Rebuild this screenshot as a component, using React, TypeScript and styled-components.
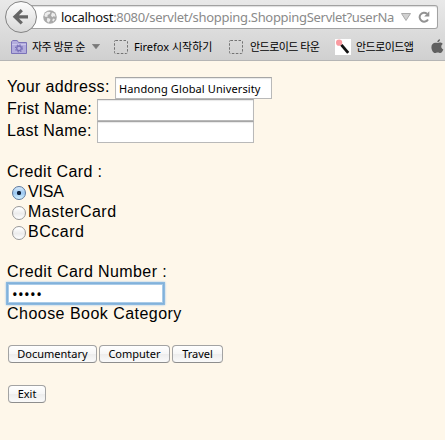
import React from 'react';
import styled, { createGlobalStyle } from 'styled-components';

const GlobalStyle = createGlobalStyle`
  * { box-sizing: border-box; }
  html, body { margin: 0; background: #fef7ea; overflow: hidden; }
`;
const uiFont = `"Noto Sans", "Noto Sans CJK KR", sans-serif`;

const Page = styled.div`
  width: 445px;
  height: 440px;
  overflow: hidden;
  background: #fef7ea;
  color: #000;
`;
const Chrome = styled.header`
  height: 61px;
  background: linear-gradient(#e9e9e9, #dedede 45%, #d0d0d0);
  border-bottom: 1px solid #b5b5b5;
  font-family: ${uiFont};
`;
const NavBar = styled.div`
  display: flex;
  height: 33px;
  padding-left: 5px;
`;
const BackButton = styled.button`
  position: relative;
  z-index: 1;
  flex: none;
  width: 32px;
  height: 32px;
  margin-top: 1px;
  padding: 0;
  display: grid;
  place-items: center;
  border: 1px solid #838383;
  border-radius: 50%;
  background: linear-gradient(#fcfcfc, #d9d9d9);
`;
const UrlBar = styled.div`
  display: flex;
  flex: none;
  align-items: center;
  width: 412px;
  height: 24px;
  margin: 5px 0 0 -11px;
  padding-left: 17px;
  border: 1px solid #a2a2a2;
  border-left: 0;
  border-radius: 0 3px 3px 0;
  background: #fff;
  box-shadow: inset 0 1px 1px #ddd;
`;
const Url = styled.div`
  width: 340px;
  margin-left: 4px;
  white-space: nowrap;
  font-size: 13px;
  line-height: 20px;
  letter-spacing: -0.31px;
  color: #8a8a8a;
`;
const Host = styled.span`
  color: #111;
`;
const UrlIcons = styled.div`
  display: flex;
  align-items: center;
  gap: 7px;
`;
const Bookmarks = styled.nav`
  display: flex;
  height: 27px;
  padding-left: 11px;
`;
const Bookmark = styled.a<{ $w: number }>`
  display: flex;
  flex: none;
  align-items: center;
  width: ${p => p.$w}px;
  color: #000;
  white-space: nowrap;
  svg { flex: none; }
`;
const BookmarkLabel = styled.span<{ $gap?: number; $spacing?: number }>`
  margin-left: ${p => p.$gap ?? 5}px;
  font-size: 11px;
  line-height: 18px;
  letter-spacing: ${p => p.$spacing ?? 0}px;
`;
const DropMark = styled.span`
  display: flex;
  margin-left: 7px;
`;
const Form = styled.main`
  padding: 15px 0 0 7px;
  font-family: "Liberation Sans", Arial, sans-serif;
  font-size: 16px;
`;
const Row = styled.div<{ $h?: number; $top?: number }>`
  display: flex;
  height: ${p => p.$h ?? 20}px;
  margin-top: ${p => p.$top ?? 0}px;
`;
const Label = styled.label<{ $spacing?: number }>`
  line-height: 20px;
  letter-spacing: ${p => p.$spacing ?? 0.35}px;
  white-space: nowrap;
`;
const FieldSlot = styled.div<{ $x: number }>`
  display: grid;
  grid-template-columns: ${p => p.$x}px auto;
`;
const Input = styled.input`
  width: 157px;
  height: 22px;
  padding: 1px 3px 0;
  border: 1px solid #b9b9b9;
  border-top-color: #a6a6a6;
  border-radius: 0;
  outline: none;
  background: #fff;
  box-shadow: inset 0 1px 1px #e8e8e8;
  font-family: ${uiFont};
  font-size: 11px;
  letter-spacing: 0.11px;
  color: #000;
`;
const PasswordInput = styled(Input)`
  height: 21px;
  margin-top: 1px;
  padding: 0 4px;
  border-color: #82b1da;
  box-shadow: 0 0 0 1px #8bb9e0, 0 0 2px 1px #9bc5e8, inset 0 0 0 1px #a9cbe8;
  font-size: 15px;
  letter-spacing: 0.4px;
`;
const Radio = styled.input`
  appearance: none;
  width: 14px;
  height: 14px;
  margin: 4px 2px 0 5px;
  border: 1px solid #999;
  border-radius: 50%;
  background: linear-gradient(#fff 10%, #ececec 55%, #fff);
  &:checked {
    border-color: #5b789e;
    background: radial-gradient(circle at 50% 50%, #10233f 0 1.8px, transparent 2.5px),
      linear-gradient(#d9eafa, #9bc8f2 50%, #d5f2ff);
  }
`;
const Button = styled.button<{ $w: number }>`
  width: ${p => p.$w}px;
  height: 18px;
  margin: 0 2px 0 0;
  padding: 0;
  border: 1px solid #a3a3a3;
  border-bottom-color: #8e8e8e;
  border-radius: 4px;
  background: linear-gradient(#fff, #f6f6f6 50%, #ededed 51%, #fafafa);
  font-family: ${uiFont};
  font-size: 11px;
  line-height: 16px;
  color: #000;
`;
const Buttons = styled(Row)`
  padding-left: 1px;
`;

const BackArrow = () => (
  <svg width="18" height="18" viewBox="0 0 18 18">
    <path d="M9.8 2.2 3 8.8l6.8 6.6M4 8.8h12" fill="none" stroke="#666" strokeWidth="3.2" />
  </svg>
);
const Globe = () => (
  <svg width="14" height="14" viewBox="0 0 14 14">
    <circle cx="7" cy="7" r="6.8" fill="#a9a9a9" />
    <path d="M2 3.5 4.5 1.7l3 .3-.8 2-2.2 1 .3 1.4L2.8 7 1.3 6zM9 2.5l2.8 1.2.8 3-2-.4-1.4 1L8 5.5zM4.4 7.7l3 1.2-.4 2-1.8 1.8-1.4-2zM10 8.5l2 .4-1.5 2.5-1.3-.8z" fill="#ededed" />
  </svg>
);
const FolderIcon = () => (
  <svg width="16" height="14" viewBox="0 0 16 14">
    <path d="M.5 13.5V1.8L1.7.5h4.5l1.3 2h8v11z" fill="#b3addd" stroke="#7b73b8" />
    <path d="M1 4.5h14" stroke="#cbc6eb" />
    <circle cx="8" cy="8.3" r="2.3" fill="#b9b2e1" stroke="#7870b8" strokeWidth="1.3" />
    <circle cx="8" cy="8.3" r="3.5" fill="none" stroke="#7870b8" strokeWidth="1.1" strokeDasharray="1.4 1.35" />
  </svg>
);
const Placeholder = () => (
  <svg width="14" height="14" viewBox="0 0 14 14">
    <rect x=".5" y=".5" width="13" height="13" rx="1" fill="none" stroke="#737373" strokeDasharray="2.5 1.5" />
  </svg>
);
const Triangle = ({ small = false }: { small?: boolean }) => (
  <svg width={small ? 8 : 10} height={small ? 5 : 8} viewBox="0 0 10 8" preserveAspectRatio="none">
    <path d="M.5.5h9L5 7.5z" fill={small ? '#787878' : '#d1d1d1'} stroke={small ? '#787878' : '#aaa'} />
  </svg>
);
const Reload = () => (
  <svg width="12" height="12" viewBox="0 0 12 12">
    <path d="M10 8.5A4.5 4.5 0 1 1 9 2.7" fill="none" stroke="#929292" strokeWidth="2" />
    <path d="M11.3.3v5.2H6.2z" fill="#929292" />
  </svg>
);
const WandIcon = () => (
  <svg width="16" height="16" viewBox="0 0 16 16">
    <path d="M0 0h16v16H0z" fill="#fff" />
    <circle cx="4.1" cy="3.7" r="3.1" fill="#fa9aa0" />
    <path d="m6.4 5.8 6.8 8" stroke="#111" strokeWidth="2.8" />
  </svg>
);
const AppleIcon = () => (
  <svg width="13" height="15" viewBox="0 0 13 15">
    <path d="M6.5 4.1C8 3.1 10.4 3 11.8 5c-2.3 1.5-1.8 4.4.5 5.4-.6 1.9-1.8 3.6-3 3.6-1 0-1.4-.6-2.6-.6s-1.6.6-2.6.6C2.2 14 .4 10.9.4 8.2.4 4.5 3.5 2.8 6.5 4.1zM6.3 3.3C6.2 1.8 7.4.4 9 .2c.1 1.6-1.1 3-2.7 3.1z" fill="#606060" />
  </svg>
);

export default function App() {
  return (
    <Page>
      <GlobalStyle />
      <Chrome>
        <NavBar>
          <BackButton aria-label="Back"><BackArrow /></BackButton>
          <UrlBar>
            <Globe />
            <Url><Host>localhost</Host>:8080/servlet/shopping.ShoppingServlet?userNa</Url>
            <UrlIcons><Triangle /><Reload /></UrlIcons>
          </UrlBar>
        </NavBar>
        <Bookmarks>
          <Bookmark $w={103}>
            <FolderIcon /><BookmarkLabel $spacing={-0.5}>자주 방문 순</BookmarkLabel>
            <DropMark><Triangle small /></DropMark>
          </Bookmark>
          <Bookmark $w={115}><Placeholder /><BookmarkLabel $gap={6}>Firefox 시작하기</BookmarkLabel></Bookmark>
          <Bookmark $w={106}><Placeholder /><BookmarkLabel $gap={7} $spacing={-0.55}>안드로이드 타운</BookmarkLabel></Bookmark>
          <Bookmark $w={96}><WandIcon /><BookmarkLabel $spacing={-0.55}>안드로이드앱</BookmarkLabel></Bookmark>
          <Bookmark $w={14}><AppleIcon /></Bookmark>
        </Bookmarks>
      </Chrome>
      <Form>
        <Row $h={22} $top={1}><FieldSlot $x={108}><Label>Your address:</Label><Input defaultValue="Handong Global University" /></FieldSlot></Row>
        <Row $h={22}><FieldSlot $x={90}><Label $spacing={0.2}>Frist Name:</Label><Input /></FieldSlot></Row>
        <Row $h={22}><FieldSlot $x={90}><Label $spacing={0.3}>Last Name:</Label><Input /></FieldSlot></Row>
        <Row $top={19}><Label>Credit Card :</Label></Row>
        <Row><Radio type="radio" name="card" defaultChecked /><Label $spacing={-0.2}>VISA</Label></Row>
        <Row><Radio type="radio" name="card" /><Label $spacing={0.5}>MasterCard</Label></Row>
        <Row><Radio type="radio" name="card" /><Label $spacing={0.5}>BCcard</Label></Row>
        <Row $top={20}><Label $spacing={0.4}>Credit Card Number :</Label></Row>
        <Row $h={22}><PasswordInput type="password" defaultValue="12345" /></Row>
        <Row><Label $spacing={0.47}>Choose Book Category</Label></Row>
        <Buttons $top={21}><Button $w={89}>Documentary</Button><Button $w={71}>Computer</Button><Button $w={51}>Travel</Button></Buttons>
        <Buttons $top={20}><Button $w={38}>Exit</Button></Buttons>
      </Form>
    </Page>
  );
}
